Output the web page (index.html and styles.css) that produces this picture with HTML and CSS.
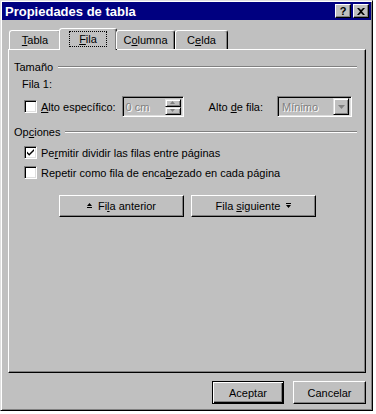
FILE: index.html
```html
<!DOCTYPE html>
<html lang="es">
<head>
    <meta charset="UTF-8">
    <title>Propiedades de tabla</title>
    <link rel="stylesheet" href="styles.css">
</head>
<body>

    <div class="dialog">
        <!-- Title bar -->
        <div class="titlebar">
            <span class="title">Propiedades de tabla</span>
            <div class="title-buttons">
                <span class="tbtn">?</span>
                <span class="tbtn close">
                    <svg width="8" height="7" viewBox="0 0 8 7"><path d="M0 0h2l2 2 2-2h2L5 3.5 8 7H6L4 5 2 7H0l3-3.5z" fill="#000"/></svg>
                </span>
            </div>
        </div>

        <div class="body">
            <!-- Tabs -->
            <div class="tabs">
                <div class="tab"><span><u>T</u>abla</span></div>
                <div class="tab active"><span class="focus"><u>F</u>ila</span></div>
                <div class="tab"><span>C<u>o</u>lumna</span></div>
                <div class="tab"><span>C<u>e</u>lda</span></div>
            </div>

            <div class="panel">
                <div class="group-title"><span>Tamaño</span></div>
                <div class="row-label">Fila 1:</div>

                <div class="size-row">
                    <span class="check"></span>
                    <span class="check-label"><u>A</u>lto específico:</span>
                    <div class="spin">
                        <span class="spin-text">0 cm</span>
                        <div class="spin-btns">
                            <span class="spin-btn">
                                <svg width="5" height="3" viewBox="0 0 5 3"><path d="M2.5 0L5 3H0z" fill="#808080"/></svg>
                            </span>
                            <span class="spin-btn">
                                <svg width="5" height="3" viewBox="0 0 5 3"><path d="M0 0h5L2.5 3z" fill="#808080"/></svg>
                            </span>
                        </div>
                    </div>
                    <span class="alto-label">Alto <u>d</u>e fila:</span>
                    <div class="combo">
                        <span class="combo-text">Mínimo</span>
                        <span class="combo-btn">
                            <svg width="7" height="4" viewBox="0 0 7 4"><path d="M0 0h7L3.5 4z" fill="#808080"/></svg>
                        </span>
                    </div>
                </div>

                <div class="group-title"><span>Op<u>c</u>iones</span></div>

                <div class="check-row">
                    <span class="check">
                        <svg width="9" height="9" viewBox="0 0 9 9"><path d="M1 3.5l2.2 2.2L8 1v2L3.2 7.7 1 5.5z" fill="#000"/></svg>
                    </span>
                    <span class="check-label">Pe<u>r</u>mitir dividir las filas entre páginas</span>
                </div>
                <div class="check-row">
                    <span class="check"></span>
                    <span class="check-label">Repetir como fila de enca<u>b</u>ezado en cada página</span>
                </div>

                <div class="nav-row">
                    <button class="btn nav">
                        <svg class="arrow-up" width="5" height="6" viewBox="0 0 5 6"><path d="M2.5 0L5 3H0z M0 4h5v1H0z" fill="#000"/></svg>
                        <span>Fi<u>l</u>a anterior</span>
                    </button>
                    <button class="btn nav">
                        <span>Fila <u>s</u>iguiente</span>
                        <svg class="arrow-down" width="5" height="6" viewBox="0 0 5 6"><path d="M0 0h5v1H0z M0 2h5L2.5 5z" fill="#000"/></svg>
                    </button>
                </div>
            </div>

            <!-- Footer -->
            <div class="footer">
                <button class="btn default">Aceptar</button>
                <button class="btn">Cancelar</button>
            </div>
        </div>
    </div>

</body>
</html>
```

FILE: styles.css
```css
/* Base */
body {
    margin: 0;
    background-color: #ffffff;
    font-family: 'Liberation Sans', Arial, sans-serif;
    font-size: 11px;
    color: #000;
}

u {
    text-decoration: underline;
    text-underline-offset: 1px;
}

/* Window */
.dialog {
    width: 373px;
    height: 411px;
    box-sizing: border-box;
    background-color: #c0c0c0;
    border: 1px solid;
    border-color: #dfdfdf #000 #000 #dfdfdf;
    box-shadow: inset 1px 1px #fff, inset -1px -1px #808080;
    padding: 1px;
    display: flex;
    flex-direction: column;
}

.titlebar {
    height: 18px;
    background-color: #000080;
    color: #fff;
    display: flex;
    align-items: center;
    justify-content: space-between;
    padding: 0 2px 0 3px;
}

.title {
    font-weight: bold;
    font-size: 13px;
}

.title-buttons {
    display: flex;
    gap: 2px;
}

.tbtn {
    width: 16px;
    height: 14px;
    box-sizing: border-box;
    background-color: #c0c0c0;
    color: #000;
    font-weight: bold;
    font-size: 11px;
    display: flex;
    align-items: center;
    justify-content: center;
    border: 1px solid;
    border-color: #fff #000 #000 #fff;
    box-shadow: inset -1px -1px #808080;
}

/* Body */
.body {
    flex: 1;
    display: flex;
    flex-direction: column;
    padding: 8px 5px 0 6px;
}

/* Tabs */
.tabs {
    display: flex;
    align-items: flex-end;
    height: 21px;
    padding-left: 1px;
    position: relative;
    z-index: 1;
}

.tab {
    height: 19px;
    box-sizing: border-box;
    display: flex;
    align-items: center;
    justify-content: center;
    border: 1px solid;
    border-bottom: none;
    border-color: #fff #000 transparent #fff;
    border-radius: 3px 3px 0 0;
    box-shadow: inset -1px 0 #808080;
}

.tab:nth-child(1) { width: 52px; }
.tab:nth-child(3) { width: 59px; }
.tab:nth-child(4) { width: 53px; }

.tab.active {
    height: 22px;
    width: 58px;
    margin: 0 -1px -1px -2px;
    background-color: #c0c0c0;
    padding-bottom: 2px;
}

.focus {
    outline: 1px dotted #000;
    padding: 1px 9px;
}

.panel {
    height: 324px;
    box-sizing: border-box;
    border: 1px solid;
    border-color: #fff #000 #000 #fff;
    box-shadow: inset -1px -1px #808080;
    padding: 10px 8px 0 5px;
}

.group-title {
    display: flex;
    align-items: center;
    gap: 5px;
    height: 14px;
}

.group-title::after {
    content: "";
    flex: 1;
    border-top: 1px solid #808080;
    border-bottom: 1px solid #fff;
}

.row-label {
    padding: 4px 0 0 8px;
    height: 14px;
}

/* Checkboxes */
.check {
    width: 13px;
    height: 13px;
    box-sizing: border-box;
    background-color: #fff;
    border: 1px solid;
    border-color: #808080 #fff #fff #808080;
    box-shadow: inset 1px 1px #000, inset -1px -1px #dfdfdf;
    display: inline-flex;
    align-items: center;
    justify-content: center;
    flex-shrink: 0;
}

.check-label {
    margin-left: 4px;
}

.size-row {
    display: flex;
    align-items: center;
    padding-left: 10px;
    margin-top: 4px;
    height: 21px;
    margin-bottom: 8px;
}

.spin {
    margin-left: 6px;
    width: 62px;
    height: 21px;
    box-sizing: border-box;
    border: 1px solid;
    border-color: #808080 #fff #fff #808080;
    box-shadow: inset 1px 1px #000, inset -1px -1px #dfdfdf;
    display: flex;
    align-items: center;
    justify-content: space-between;
    padding: 2px 2px 2px 3px;
}

.spin-text,
.combo-text {
    color: #808080;
    text-shadow: 1px 1px #fff;
}

.spin-btns {
    display: flex;
    flex-direction: column;
    width: 16px;
    height: 16px;
}

.spin-btn {
    flex: 1;
    border: 1px solid;
    border-color: #dfdfdf #000 #000 #dfdfdf;
    box-shadow: inset 1px 1px #fff, inset -1px -1px #808080;
    display: flex;
    align-items: center;
    justify-content: center;
}

.alto-label {
    margin-left: 25px;
}

.combo {
    margin-left: 14px;
    width: 75px;
    height: 21px;
    box-sizing: border-box;
    border: 1px solid;
    border-color: #808080 #fff #fff #808080;
    box-shadow: inset 1px 1px #000, inset -1px -1px #dfdfdf;
    display: flex;
    align-items: center;
    justify-content: space-between;
    padding: 2px;
}

.combo-text {
    padding-left: 2px;
}

.combo-btn {
    width: 16px;
    height: 17px;
    box-sizing: border-box;
    border: 1px solid;
    border-color: #dfdfdf #000 #000 #dfdfdf;
    box-shadow: inset 1px 1px #fff, inset -1px -1px #808080;
    display: flex;
    align-items: center;
    justify-content: center;
}

.check-row {
    display: flex;
    align-items: center;
    padding-left: 10px;
    height: 13px;
    margin-top: 7px;
}

/* Buttons */
.btn {
    font-family: inherit;
    font-size: 11px;
    color: #000;
    background-color: #c0c0c0;
    height: 23px;
    box-sizing: border-box;
    border: 1px solid;
    border-color: #fff #000 #000 #fff;
    box-shadow: inset -1px -1px #808080;
    border-radius: 0;
    padding: 0;
    display: inline-flex;
    align-items: center;
    justify-content: center;
}

.arrow-up {
    margin-right: 6px;
}

.arrow-down {
    margin-left: 6px;
}

.nav-row {
    display: flex;
    gap: 7px;
    padding-left: 45px;
    margin-top: 16px;
}

.btn.nav {
    width: 125px;
    height: 22px;
}

.footer {
    display: flex;
    justify-content: flex-end;
    gap: 9px;
    padding: 8px 0 0 0;
}

.footer .btn {
    width: 73px;
}

.btn.default {
    border: 1px solid #000;
    box-shadow: inset 1px 1px #fff, inset -1px -1px #000, inset -2px -2px #808080;
    width: 72px;
}
```
